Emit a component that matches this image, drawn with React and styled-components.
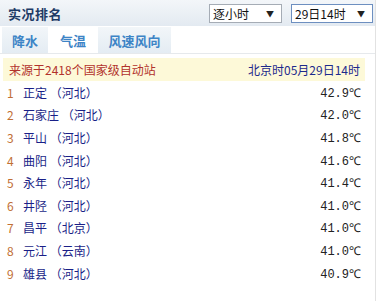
import React from 'react'
import styled, { createGlobalStyle } from 'styled-components'

const Global = createGlobalStyle`
  body {
    margin: 0;
    background: #fff;
    font-family: "Noto Sans CJK SC", "Liberation Sans", sans-serif;
  }
`

const Panel = styled.div`
  width: 376px;
  height: 301px;
  border-right: 1px solid #e2e2e2;
  box-sizing: border-box;
`

const Header = styled.div`
  height: 26px;
  display: flex;
  align-items: center;
  justify-content: space-between;
  padding: 0 2px 0 8px;
  background: linear-gradient(#f3f6f9, #e3eaf1);
`

const Title = styled.h3`
  margin: 0;
  font-size: 13px;
  font-weight: bold;
  color: #1e3b66;
  letter-spacing: 0.5px;
`

const Selects = styled.div`
  display: flex;
  gap: 9px;
`

const Select = styled.div`
  width: ${p => p.w}px;
  flex-shrink: 0;
  white-space: nowrap;
  height: 19px;
  box-sizing: border-box;
  border: 1px solid ${p => (p.focus ? '#6d8fc0' : '#a5acb5')};
  background: #fff;
  display: flex;
  align-items: center;
  justify-content: space-between;
  padding: 0 7px 0 3px;
  font-size: 12px;
  color: #111;
  &::after {
    content: '▼';
    font-size: 8px;
    color: #222;
  }
`

const Tabs = styled.div`
  height: 27px;
  display: flex;
  align-items: flex-end;
  gap: 2px;
  padding-left: 2px;
  border-bottom: 1px solid #e6e9ec;
`

const Tab = styled.div`
  width: ${p => p.w}px;
  height: 26px;
  display: flex;
  align-items: center;
  justify-content: center;
  font-size: 13px;
  font-weight: bold;
  color: #3d84c6;
  background: ${p => (p.active ? '#fff' : 'linear-gradient(#f2f6f9, #e4ecf3)')};
`

const Source = styled.div`
  margin: 4px 10px 0 3px;
  height: 23px;
  display: flex;
  align-items: center;
  justify-content: space-between;
  padding: 0 5px 0 6px;
  background: #fdf9d8;
  font-size: 12px;
`

const SourceLeft = styled.span`
  color: #b2322c;
`

const SourceRight = styled.span`
  color: #1d2a8c;
`

const List = styled.div`
  padding: 0 14px 0 7px;
`

const Row = styled.div`
  height: 22.6px;
  display: flex;
  align-items: center;
  font-size: 12px;
`

const Num = styled.span`
  width: 16px;
  color: #c16f35;
`

const Name = styled.span`
  flex: 1;
  color: #1a1f88;
  white-space: pre;
`

const Temp = styled.span`
  color: #222;
  font-family: "Liberation Mono", monospace;
  font-size: 12px;
`

const rows = [
  ['正定', '河北', '42.9'],
  ['石家庄', '河北', '42.0'],
  ['平山', '河北', '41.8'],
  ['曲阳', '河北', '41.6'],
  ['永年', '河北', '41.4'],
  ['井陉', '河北', '41.0'],
  ['昌平', '北京', '41.0'],
  ['元江', '云南', '41.0'],
  ['雄县', '河北', '40.9'],
]

export default function App() {
  return (
    <Panel>
      <Global />
      <Header>
        <Title>实况排名</Title>
        <Selects>
          <Select w={73}>逐小时</Select>
          <Select w={82} focus>29日14时</Select>
        </Selects>
      </Header>
      <Tabs>
        <Tab w={46}>降水</Tab>
        <Tab w={46} active>气温</Tab>
        <Tab w={73}>风速风向</Tab>
      </Tabs>
      <Source>
        <SourceLeft>来源于2418个国家级自动站</SourceLeft>
        <SourceRight>北京时05月29日14时</SourceRight>
      </Source>
      <List>
        {rows.map((r, i) => (
          <Row key={i}>
            <Num>{i + 1}</Num>
            <Name>{r[0]} （{r[1]}）</Name>
            <Temp>{r[2]}℃</Temp>
          </Row>
        ))}
      </List>
    </Panel>
  )
}
